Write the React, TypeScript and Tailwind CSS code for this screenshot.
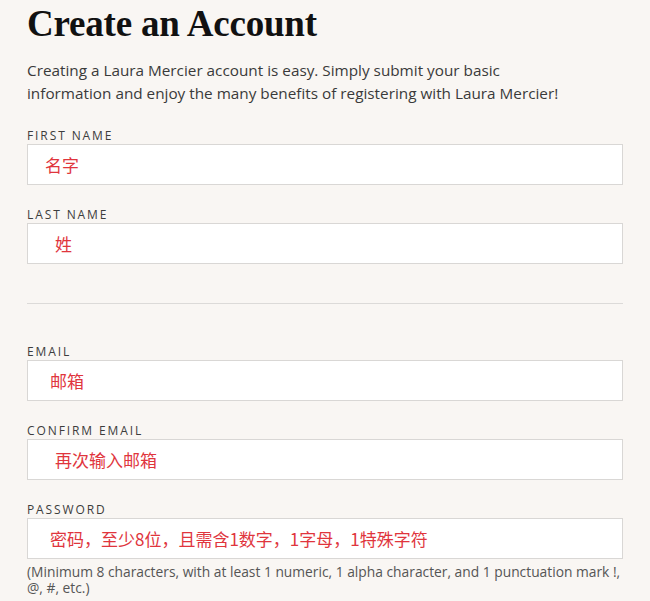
import React from "react";

type Field = { label: string; hint: string; indent: string };

const nameFields: Field[] = [
  { label: "FIRST NAME", hint: "名字", indent: "pl-[17px]" },
  { label: "LAST NAME", hint: "姓", indent: "pl-[27px]" },
];

const contactFields: Field[] = [
  { label: "EMAIL", hint: "邮箱", indent: "pl-[22px]" },
  { label: "CONFIRM EMAIL", hint: "再次输入邮箱", indent: "pl-[27px]" },
  { label: "PASSWORD", hint: "密码，至少8位，且需含1数字，1字母，1特殊字符", indent: "pl-[22px]" },
];

function FormField({ field }: { field: Field }) {
  return (
    <div className="flex flex-col">
      <label className="text-[12px] leading-[16px] tracking-[1.9px] text-[#3d3d3d] font-['Open_Sans',sans-serif]">
        {field.label}
      </label>
      <div
        className={`h-[41px] bg-white border border-[#d9d7d5] flex items-center ${field.indent} text-[17px] text-[#e0353d] font-['Noto_Sans_CJK_SC',sans-serif]`}
      >
        {field.hint}
      </div>
    </div>
  );
}

export default function App() {
  return (
    <div className="min-h-[601px] w-[650px] bg-[#f9f6f3] pl-[27px] pt-[2px]">
      <div className="w-[596px]">
        <h1 className="text-[37px] leading-[44px] font-bold tracking-[-0.2px] text-[#111] font-['Liberation_Serif',serif]">
          Create an Account
        </h1>
        <p className="mt-[13px] text-[15.3px] leading-[23px] text-[#3a3a3a] font-['Open_Sans',sans-serif]">
          Creating a Laura Mercier account is easy. Simply submit your basic
          <br />
          information and enjoy the many benefits of registering with Laura Mercier!
        </p>

        <div className="mt-[23px] flex flex-col gap-[22px]">
          {nameFields.map((f) => (
            <FormField key={f.label} field={f} />
          ))}
        </div>

        <div className="mt-[39px] border-t border-[#dcdad8]" />

        <div className="mt-[40px] flex flex-col gap-[22px]">
          {contactFields.map((f) => (
            <FormField key={f.label} field={f} />
          ))}
        </div>
        <p className="mt-[5px] text-[13.8px] leading-[16px] text-[#555] font-['Open_Sans',sans-serif]">
          (Minimum 8 characters, with at least 1 numeric, 1 alpha character, and 1 punctuation mark !, @, #, etc.)
        </p>
      </div>
    </div>
  );
}
